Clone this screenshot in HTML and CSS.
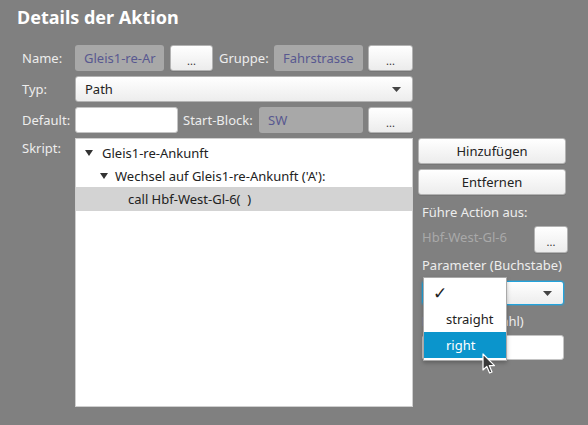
FILE: index.html
```html
<!DOCTYPE html>
<html lang="de">
<head>
<meta charset="utf-8">
<title>Details der Aktion</title>
<link rel="stylesheet" href="styles.css">
</head>
<body>
<div class="dialog">
  <h1 class="title">Details der Aktion</h1>
  <div class="form">
    <div class="row">
      <span class="label lcol">Name:</span>
      <span class="field w89">Gleis1-re-Ar</span>
      <button class="btn w43 ml6">...</button>
      <span class="label glabel">Gruppe:</span>
      <span class="field w89">Fahrstrasse</span>
      <button class="btn w45 ml5">...</button>
    </div>
    <div class="row">
      <span class="label lcol">Typ:</span>
      <div class="combo wtyp">
        <span class="combo-text">Path</span>
        <svg class="arrow" width="9" height="5" viewBox="0 0 9 5"><path d="M0 0H9L4.5 5Z" fill="#444"/></svg>
      </div>
    </div>
    <div class="row">
      <span class="label lcol">Default:</span>
      <span class="input w103"></span>
      <span class="label slabel">Start-Block:</span>
      <span class="field w104">SW</span>
      <button class="btn w45 ml5">...</button>
    </div>
    <div class="lower">
      <span class="label lcol skript">Skript:</span>
      <div class="tree">
        <div class="node lvl1">
          <svg class="tri" width="8" height="6" viewBox="0 0 8 6"><path d="M0 0H8L4 6Z" fill="#333"/></svg>
          <span>Gleis1-re-Ankunft</span>
        </div>
        <div class="node lvl2">
          <svg class="tri" width="8" height="6" viewBox="0 0 8 6"><path d="M0 0H8L4 6Z" fill="#333"/></svg>
          <span>Wechsel auf Gleis1-re-Ankunft ('A'):</span>
        </div>
        <div class="node lvl3 selected">
          <span>call Hbf-West-Gl-6(&nbsp; )</span>
        </div>
      </div>
      <div class="side">
        <button class="btn sbtn">Hinzufügen</button>
        <button class="btn sbtn">Entfernen</button>
        <div class="slabel2 p0">Führe Action aus:</div>
        <div class="action-row">
          <span class="disabled">Hbf-West-Gl-6</span>
          <button class="btn abtn">...</button>
        </div>
        <div class="slabel2 p1">Parameter (Buchstabe)</div>
        <div class="combo focus pcombo">
          <span class="combo-text"></span>
          <svg class="arrow" width="9" height="5" viewBox="0 0 9 5"><path d="M0 0H9L4.5 5Z" fill="#444"/></svg>
        </div>
        <div class="slabel2 p2">Parameter (Zahl)</div>
        <span class="input pinput"></span>

        <div class="popup">
          <div class="opt"><span class="check">✓</span></div>
          <div class="opt">straight</div>
          <div class="opt sel">right</div>
        </div>
        <svg class="cursor" width="14" height="22" viewBox="0 0 14 22">
          <path d="M1 1 L1 17 L4.8 13.4 L7.6 20 L10 19 L7.3 12.6 L12.5 12.6 Z" fill="#3a3a3a" stroke="#fff" stroke-width="1.2" stroke-linejoin="round"/>
        </svg>
      </div>
    </div>
  </div>
</div>
</body>
</html>
```

FILE: styles.css
```css
html, body {
  margin: 0;
  padding: 0;
}
body {
  width: 588px;
  height: 425px;
  overflow: hidden;
  background: #808080;
  font-family: "Noto Sans", "Open Sans", sans-serif;
  font-size: 13px;
  color: #ededed;
}
.dialog {
  width: 588px;
  height: 425px;
}
.title {
  margin: 0;
  padding: 5px 0 0 17px;
  height: 25px;
  font-size: 18px;
  line-height: 24px;
  font-weight: 700;
  color: #ffffff;
}
.form {
  padding: 15px 0 0 22px;
  display: flex;
  flex-direction: column;
  gap: 5px;
}
.row {
  display: flex;
  align-items: center;
  height: 26px;
}
.label {
  line-height: 26px;
  white-space: nowrap;
}
.lcol { width: 53px; flex: none; }
.glabel { width: 51px; margin-left: 6px; margin-right: 4px; }
.slabel { width: 76px; margin-left: 5px; }
.field {
  box-sizing: border-box;
  height: 26px;
  line-height: 26px;
  padding: 0 9px;
  background: #a8a8a8;
  border-radius: 3px;
  color: #585890;
  overflow: hidden;
  white-space: nowrap;
  flex: none;
}
.w89 { width: 89px; }
.w104 { width: 104px; }
.w103 { width: 103px; }
.input {
  box-sizing: border-box;
  display: block;
  height: 26px;
  background: #fff;
  border: 1px solid #c4c4c4;
  border-radius: 3px;
  flex: none;
}
.btn {
  box-sizing: border-box;
  height: 26px;
  padding: 0;
  border: 1px solid #b3b3b3;
  border-radius: 3px;
  background: linear-gradient(#ffffff, #ececec);
  font-family: inherit;
  font-size: 13px;
  color: #222;
  flex: none;
  box-shadow: 0 1px 0 rgba(0,0,0,0.08);
}
.w43 { width: 43px; }
.w45 { width: 45px; }
.ml6 { margin-left: 6px; }
.ml5 { margin-left: 5px; }
.btn.w43, .btn.w45, .abtn {
  font-size: 11px;
  padding-top: 4px;
  color: #333;
}
.combo {
  box-sizing: border-box;
  height: 26px;
  display: flex;
  align-items: center;
  justify-content: space-between;
  border: 1px solid #b3b3b3;
  border-radius: 3px;
  background: linear-gradient(#ffffff, #ededed);
  color: #222;
  padding: 0 11px 0 9px;
  flex: none;
}
.wtyp { width: 338px; }
.arrow { display: block; }
.lower {
  display: flex;
  align-items: flex-start;
}
.skript { line-height: 20px; }
.tree {
  box-sizing: border-box;
  width: 338px;
  height: 269px;
  background: #fff;
  border: 1px solid #cfcfcf;
  padding-top: 2px;
  color: #222;
  flex: none;
}
.node {
  display: flex;
  align-items: center;
  height: 23px;
  white-space: nowrap;
}
.tri { display: block; margin-right: 9px; }
.lvl1 { padding-left: 9px; }
.lvl2 { padding-left: 24px; }
.lvl2 .tri { margin-right: 7px; }
.lvl3 { padding-left: 52px; height: 24px; }
.selected { background: #d3d3d3; }
.side {
  position: relative;
  width: 150px;
  margin-left: 5px;
  display: flex;
  flex-direction: column;
  flex: none;
}
.sbtn { width: 148px; margin-bottom: 5px; }
.slabel2 {
  padding-left: 4px;
  font-size: 13px;
  line-height: 20px;
  white-space: nowrap;
}
.p0 { margin-top: 2px; }
.action-row {
  display: flex;
  align-items: center;
  justify-content: space-between;
  height: 27px;
  padding-left: 4px;
  margin-top: 4px;
  width: 146px;
}
.disabled { color: #a9a9a9; margin-bottom: 5px; }
.abtn { width: 34px; height: 27px; }
.p1 { margin-top: 2px; }
.pcombo {
  width: 142px;
  height: 24px;
  margin-left: 4px;
  margin-top: 6px;
}
.focus {
  border: 1px solid #23a3dc;
  box-shadow: 0 0 0 1px rgba(35,163,220,0.35);
}
.p2 { margin-top: 6px; }
.pinput {
  width: 142px;
  height: 25px;
  margin-left: 4px;
  margin-top: 4px;
}
.popup {
  position: absolute;
  left: 5px;
  top: 139px;
  box-sizing: border-box;
  width: 84px;
  height: 84px;
  background: #fff;
  border: 1px solid #a9a9a9;
  padding: 2px 0;
  box-shadow: 0 2px 4px rgba(0,0,0,0.25);
  color: #222;
}
.opt {
  height: 26px;
  line-height: 26px;
  padding-left: 22px;
  white-space: nowrap;
}
.opt .check {
  margin-left: -13px;
  font-size: 17px;
  color: #222;
}
.opt.sel {
  background: #0b95cc;
  color: #fff;
}
.cursor {
  position: absolute;
  left: 64px;
  top: 215px;
}
```
